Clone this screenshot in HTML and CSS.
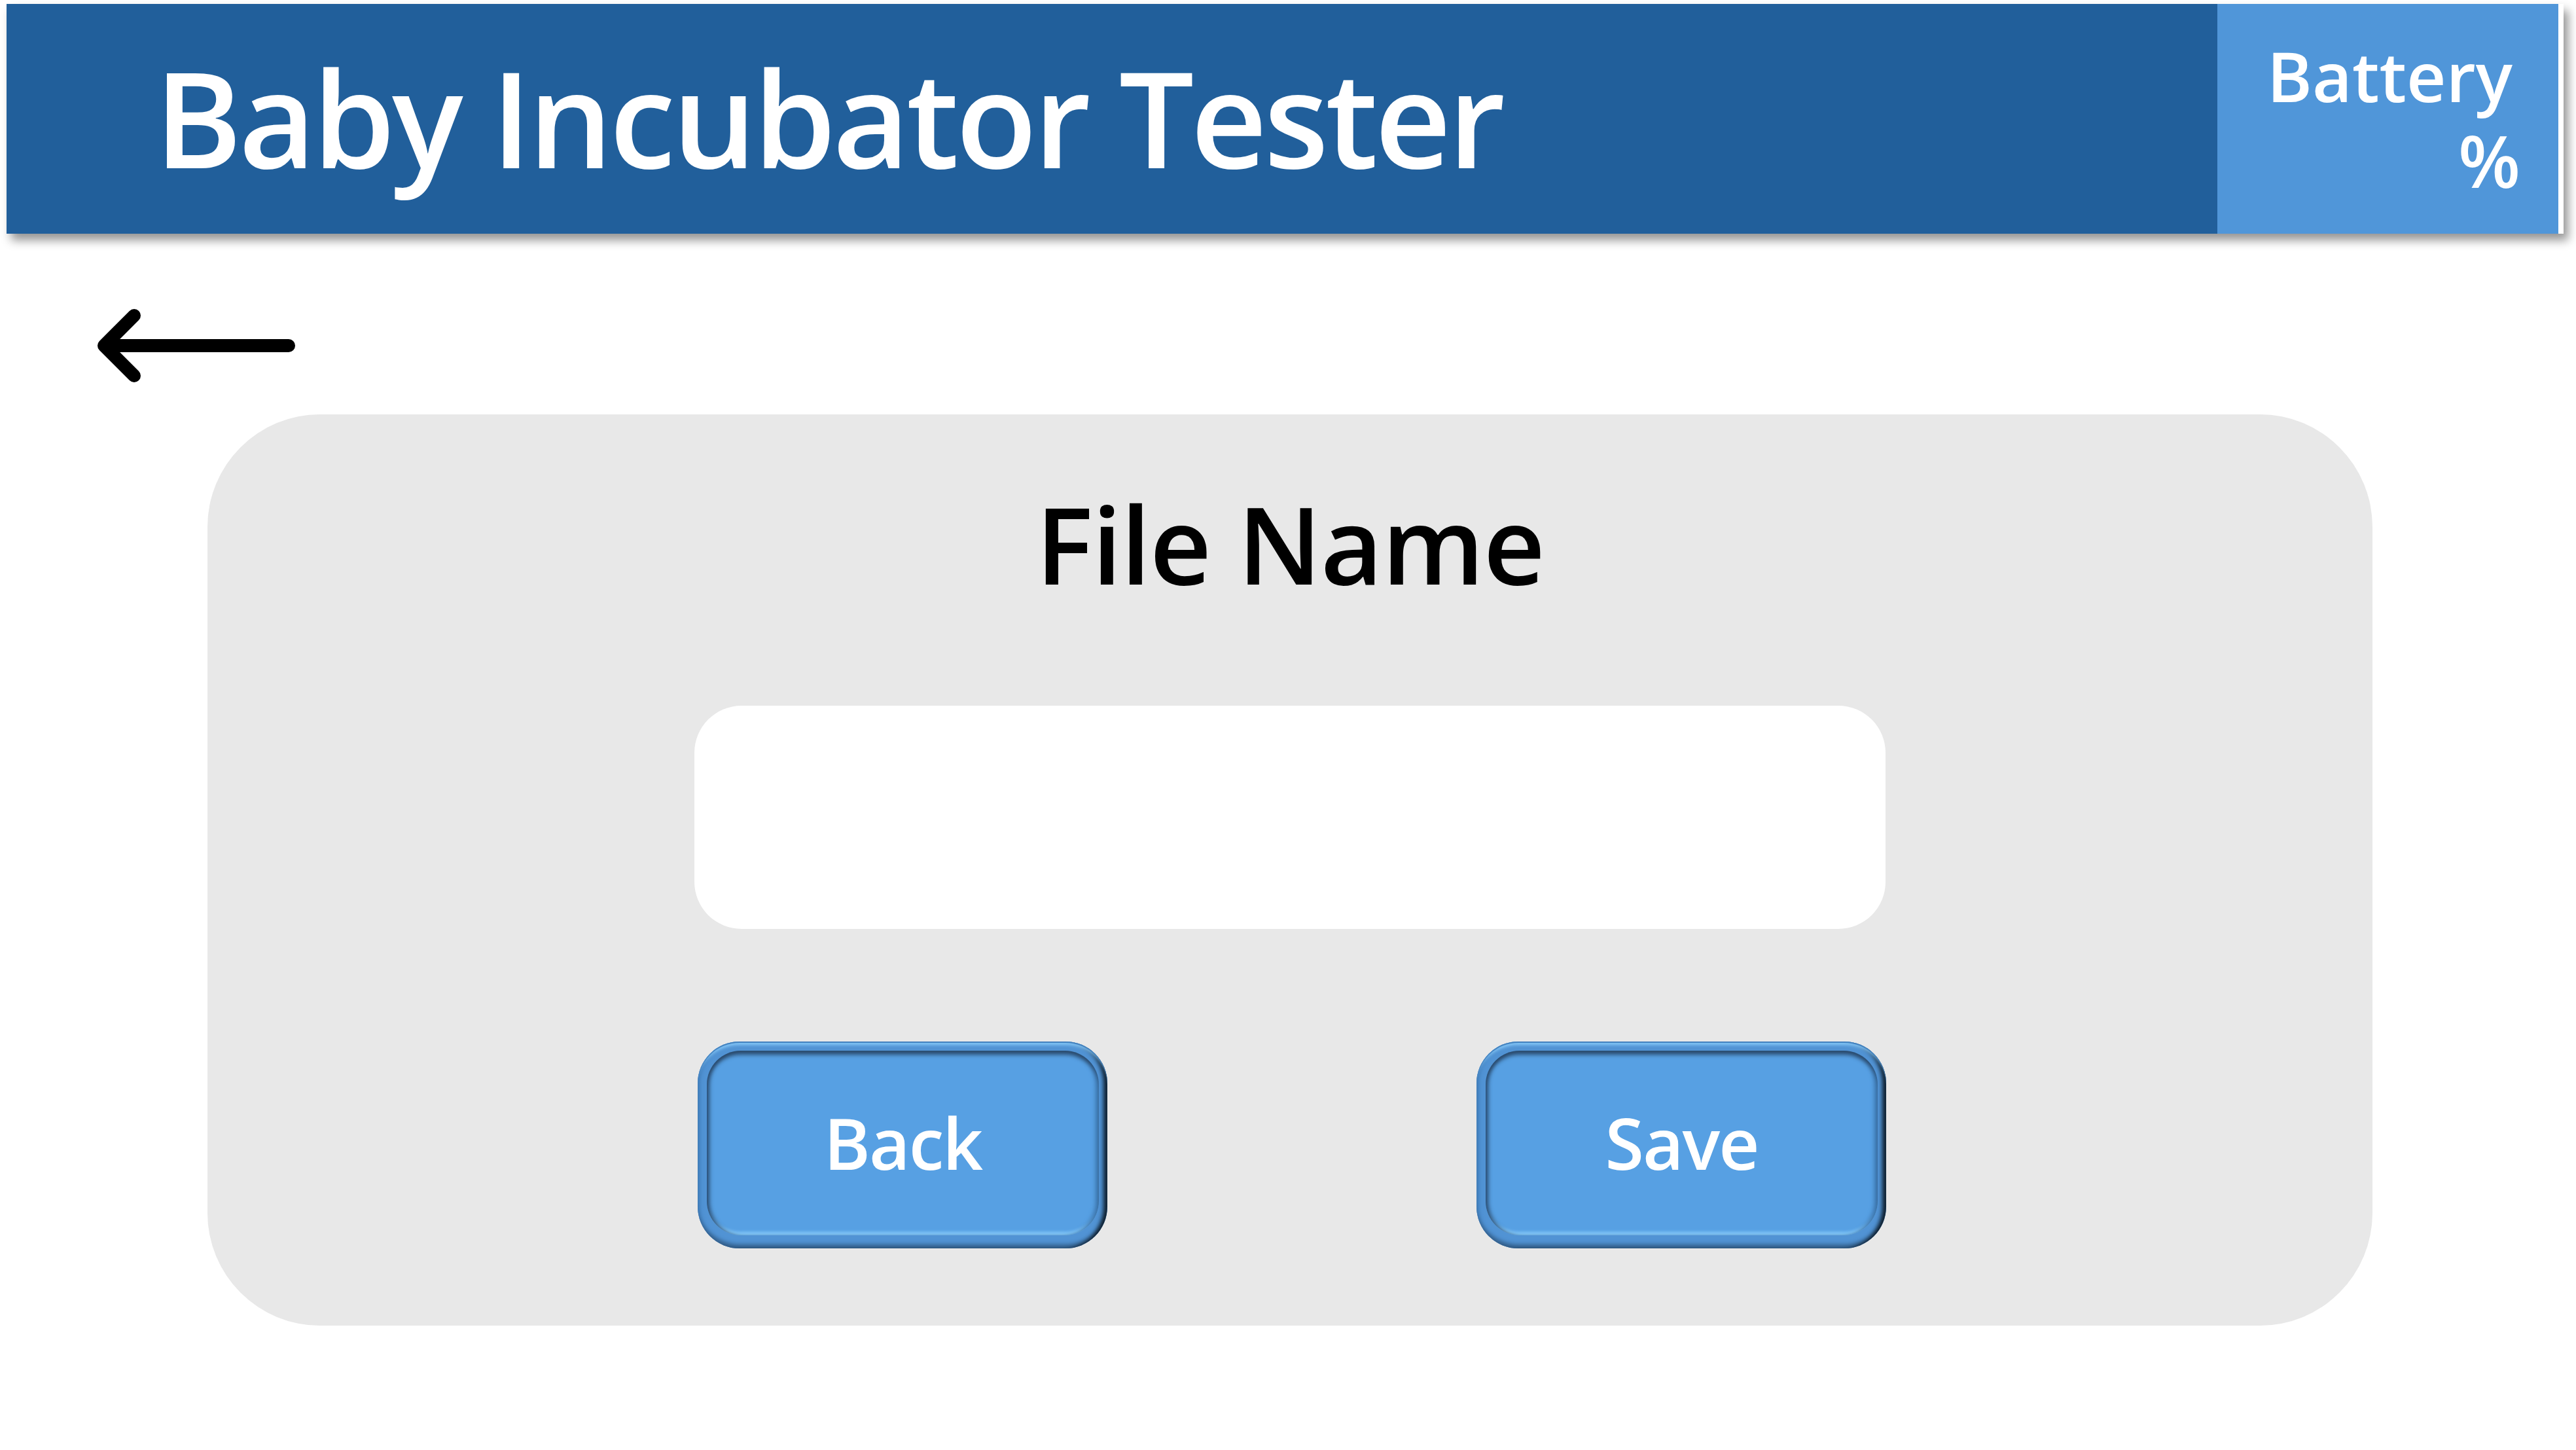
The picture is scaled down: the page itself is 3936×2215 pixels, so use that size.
FILE: index.html
```html
<!DOCTYPE html>
<html lang="en">
<head>
<meta charset="utf-8">
<title>Baby Incubator Tester</title>
<link rel="stylesheet" href="styles.css">
</head>
<body>
  <header class="header">
    <div class="title-bar">
      <h1 class="title">Baby Incubator Tester</h1>
    </div>
    <div class="battery">
      <span class="battery-label">Battery</span><br>
      <span class="battery-value">%</span>
    </div>
  </header>

  <div class="nav-row">
    <svg class="back-arrow" width="330" height="160" viewBox="0 0 330 160" aria-label="Back">
      <path d="M75 32 L29 78 L75 124 M29 78 L311 78" fill="none" stroke="#000" stroke-width="20" stroke-linecap="round" stroke-linejoin="round"/>
    </svg>
  </div>

  <main class="card">
    <h2 class="card-title">File Name</h2>
    <div class="name-input"></div>
    <div class="actions">
      <div class="btn"><div class="btn-face">Back</div></div>
      <div class="btn"><div class="btn-face">Save</div></div>
    </div>
  </main>
</body>
</html>
```

FILE: styles.css
```css
html, body {
  margin: 0;
  padding: 0;
  background: #ffffff;
}

body {
  width: 3936px;
  height: 2215px;
  overflow: hidden;
  font-family: "Open Sans", "Noto Sans", "Liberation Sans", sans-serif;
}

.header {
  display: flex;
  margin: 6px 0 0 10px;
  width: 3907px;
  height: 351px;
  padding-right: 8px;
  box-sizing: border-box;
  background: #ffffff;
  box-shadow: 7px 10px 14px rgba(0, 0, 0, 0.42);
}

.title-bar {
  flex: 1;
  display: flex;
  align-items: center;
  background: #215f9b;
}

.title {
  margin: 0 0 6px 226px;
  font-size: 203px;
  line-height: 1;
  font-weight: 600;
  letter-spacing: -5px;
  color: #ffffff;
}

.battery {
  width: 521px;
  box-sizing: border-box;
  padding: 46px 58px 0 0;
  background: #5096d9;
  color: #ffffff;
  text-align: right;
  font-size: 105px;
  line-height: 128px;
  font-weight: 600;
}

.battery-label {
  padding-right: 12px;
}

.battery-value {
  font-size: 110px;
}

.nav-row {
  display: flex;
  padding: 93px 0 0 130px;
  height: 160px;
}

.back-arrow {
  display: block;
}

.card {
  margin: 23px 0 0 317px;
  width: 3308px;
  height: 1392px;
  box-sizing: border-box;
  padding-top: 115px;
  border-radius: 172px;
  background: #e8e8e8;
  display: flex;
  flex-direction: column;
  align-items: center;
}

.card-title {
  margin: 0;
  font-size: 164px;
  line-height: 164px;
  font-weight: 600;
  letter-spacing: -1.5px;
  color: #000000;
}

.name-input {
  margin-top: 166px;
  width: 1820px;
  height: 341px;
  border-radius: 72px;
  background: #ffffff;
}

.actions {
  margin-top: 172px;
  margin-left: 6px;
  display: flex;
  gap: 564px;
}

.btn {
  width: 626px;
  height: 316px;
  box-sizing: border-box;
  padding: 14px 13px 20px 14px;
  border-radius: 64px;
  background: #5193d4;
  box-shadow:
    inset 0 2px 1px #3f7dbb,
    inset 0 10px 5px -5px #8acdfc,
    inset -9px 0 6px -3px #10202f,
    inset 0 -10px 6px -4px #34608c,
    inset 6px 0 6px -3px #3f7bb7;
  display: flex;
}

.btn-face {
  flex: 1;
  border-radius: 52px;
  background: #57a0e3;
  box-shadow:
    inset 0 9px 6px -3px #2a4a6c,
    inset 7px 0 6px -3px #2b4d72,
    inset -8px 0 6px -3px #3c74ab,
    inset 0 -8px 4px -3px #86cbfb;
  display: flex;
  align-items: center;
  justify-content: center;
  color: #ffffff;
  font-size: 108px;
  line-height: 1;
  font-weight: 600;
  letter-spacing: -2px;
}
```
